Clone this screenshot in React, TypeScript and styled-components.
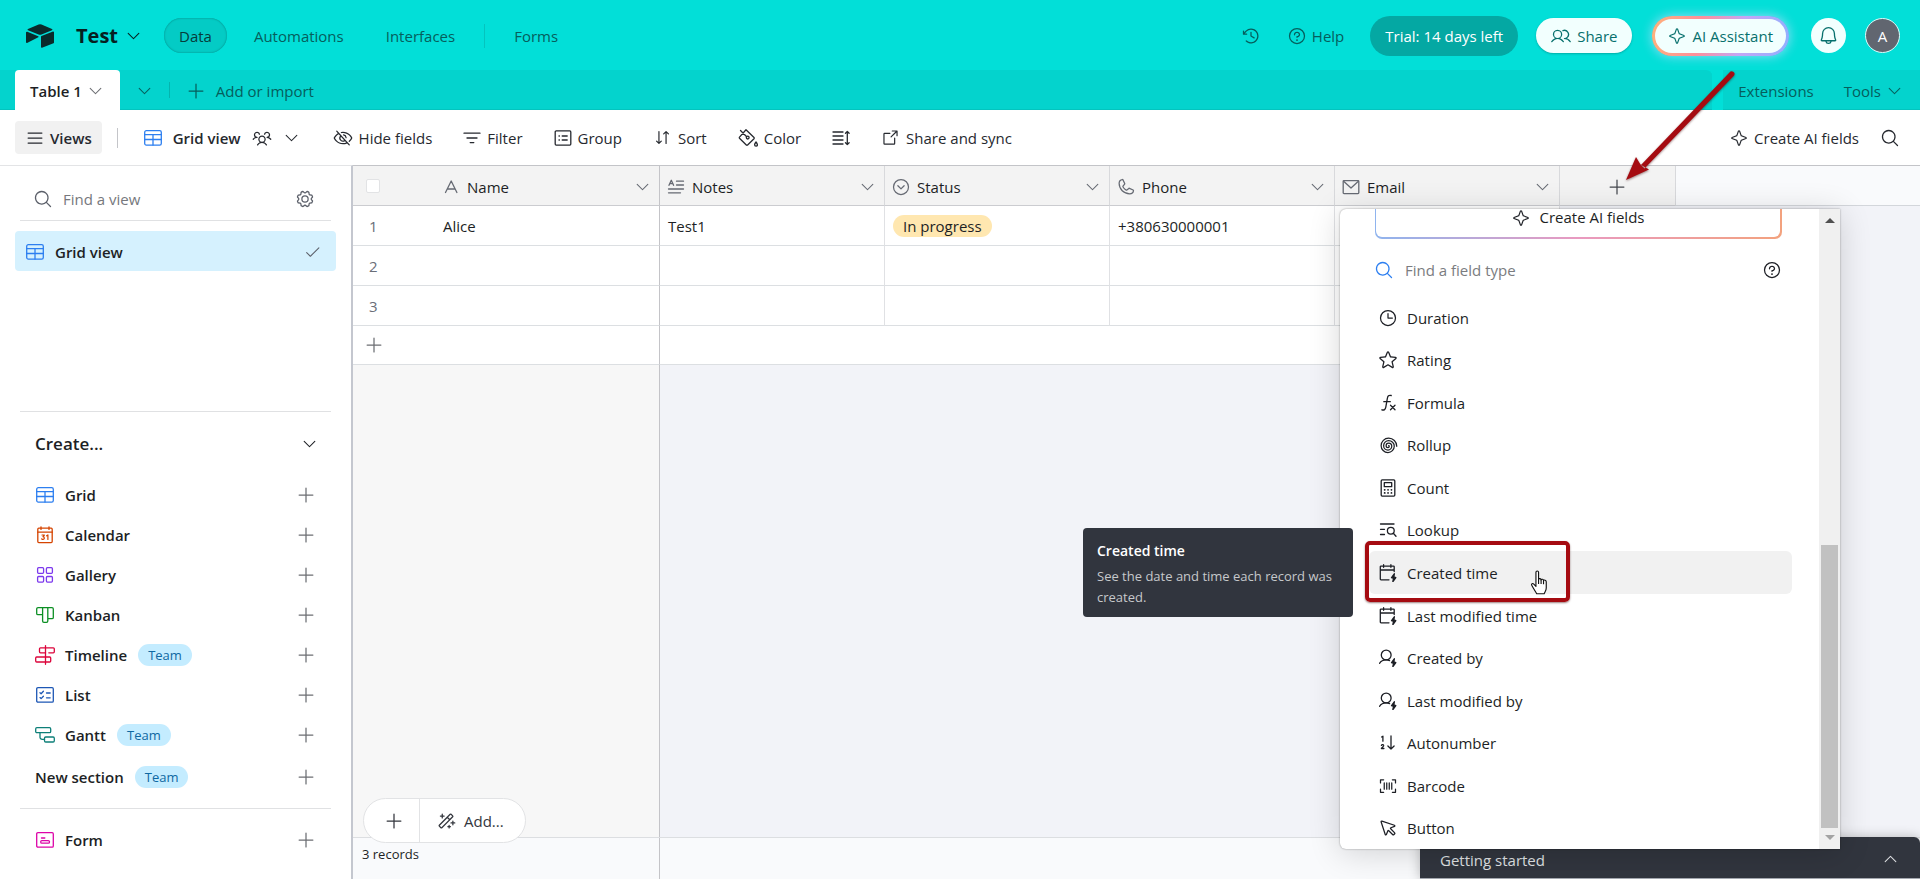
import React from "react";
import styled, { createGlobalStyle, css } from "styled-components";
import {
  PiArrowSquareOut, PiArrowsDownUp, PiBarcode, PiBell, PiCaretCircleDown, PiCaretDown,
  PiCaretUp, PiCheck, PiClock, PiClockCounterClockwise, PiCursor, PiEyeSlash,
  PiGear, PiList, PiMagicWand, PiMagnifyingGlass, PiPhone, PiPlus, PiQuestion,
  PiSpiral, PiStar, PiStarFour, PiUsers, PiUsersThree,
} from "react-icons/pi";

const GlobalStyle = createGlobalStyle`
  *, *::before, *::after { box-sizing: border-box; }
  body { margin: 0; color: #1d1f25; background: #fff; font: 15px/20px "Open Sans", "Noto Sans", sans-serif; }
  button, input { font: inherit; color: inherit; }
  button { border: 0; padding: 0; background: none; cursor: pointer; white-space: nowrap; }
  a { color: inherit; text-decoration: none; }
  svg { display: block; flex: none; }
`;

/* ---------- icons ---------- */

const Stroke = ({ size = 18, children }: { size?: number; children: React.ReactNode }) => (
  <svg width={size} height={size} viewBox="0 0 18 18" fill="none" stroke="currentColor" strokeWidth="1.3" strokeLinecap="round" strokeLinejoin="round" aria-hidden="true">
    {children}
  </svg>
);

const GridIcon = () => (
  <Stroke><rect x="0.7" y="1.7" width="16.6" height="14.4" rx="1.6" /><path d="M.7 5.7h16.6M.7 10.5h16.6M9 5.7v10.4" /></Stroke>
);
const CalendarIcon = () => (
  <Stroke>
    <rect x="1.8" y="2.2" width="14.4" height="14.4" rx="1" /><path d="M1.8 6.2h14.4M5 .8v2.6M13 .8v2.6" />
    <path d="M6 9h2.4L7 10.7c1.6 0 1.9 2.6 0 2.7-.6 0-1-.2-1.3-.6M10.6 9.8l1.3-.9v4.5" strokeWidth="1.2" />
  </Stroke>
);
const GalleryIcon = () => (
  <Stroke><rect x="1.6" y="1.7" width="6" height="5.6" rx="1" /><rect x="10.4" y="1.7" width="6" height="5.6" rx="1" /><rect x="1.6" y="10.5" width="6" height="5.6" rx="1" /><rect x="10.4" y="10.5" width="6" height="5.6" rx="1" /></Stroke>
);
const KanbanIcon = () => (
  <Stroke><path d="M2 1.7h14a1.3 1.3 0 0 1 1.3 1.3v8.4a1.3 1.3 0 0 1-1.3 1.3h-4.2V15a1.3 1.3 0 0 1-1.3 1.3H7.9A1.3 1.3 0 0 1 6.600 15V8.700H2A1.300 1.300 0 0 1 .7 7.400V3A1.300 1.300 0 0 1 2 1.700zM6.600 1.700v7M11.800 1.700v11" /></Stroke>
);
const TimelineIcon = () => (
  <svg width="20" height="20" viewBox="0 0 20 20" fill="none" stroke="currentColor" strokeWidth="1.3" strokeLinecap="round" aria-hidden="true">
    <path d="M10.500.7v18.600" /><path d="M10.500 7.800H5.500a1 1 0 0 1-1-1v-3a1 1 0 0 1 1-1h12.800a1 1 0 0 1 1 1v3a1 1 0 0 1-1 1h-4.500M10.500 12H1.700a1 1 0 0 0-1 1v3a1 1 0 0 0 1 1h13a1 1 0 0 0 1-1v-3a1 1 0 0 0-1-1z" />
  </svg>
);
const ListIcon = () => (
  <Stroke><rect x=".7" y="1.700" width="16.600" height="14.400" rx="1.200" /><path d="M4 6.700l1.100 1 2.300-2.400M4 11.600l1.100 1 2.300-2.400M10.500 7h3.700M10.500 11.800h3.700" /></Stroke>
);
const GanttIcon = () => (
  <svg width="20" height="20" viewBox="0 0 20 20" fill="none" stroke="currentColor" strokeWidth="1.3" strokeLinecap="round" aria-hidden="true">
    <rect x=".7" y="2.700" width="15" height="5" rx="1.200" /><rect x="9.500" y="12" width="9.800" height="5" rx="1.200" /><path d="M5 7.700v4.500a2.200 2.200 0 0 0 2.200 2.200h2.300" />
  </svg>
);
const FormIcon = () => (
  <Stroke><rect x=".7" y="1.700" width="16.600" height="14.400" rx="1.200" /><path d="M5.500 7h3.300" /><rect x="4.700" y="9.600" width="8.800" height="2.600" rx="1.200" /></Stroke>
);
const FilterIcon = () => <Stroke><path d="M1 4.200h16M4 9h10M7.200 13.600h3.600" /></Stroke>;
const GroupIcon = () => (
  <Stroke><rect x="1.200" y="1.900" width="15.600" height="14.200" rx="1" /><path d="M5 7h.4M5 11h.4M8.200 7h5M8.200 11h5" /></Stroke>
);
const ColorIcon = () => (
  <svg width="20" height="20" viewBox="0 0 20 20" fill="none" stroke="currentColor" strokeWidth="1.3" strokeLinecap="round" strokeLinejoin="round" aria-hidden="true">
    <path d="M2.500 2.500l6.200 6.200M8 1.800l8 7.700a.9.9 0 0 1 0 1.200L9.600 17a1 1 0 0 1-1.300 0L1.500 10.300a.9.9 0 0 1 0-1.200z" />
    <circle cx="9.700" cy="9.600" r="1.400" />
    <path d="M18 14c-1 1.400-1.400 2-1.400 2.800a1.400 1.400 0 0 0 2.800 0c0-.8-.4-1.400-1.400-2.800z" />
  </svg>
);
const RowHeightIcon = () => (
  <Stroke><path d="M1 3h10M1 7h10M1 11h10M1 15h10M15.300 2.500v13M13.500 4.200l1.800-1.800 1.800 1.800M13.500 13.800l1.800 1.800 1.800-1.800" /></Stroke>
);
const TextFieldIcon = () => <Stroke><path d="M3.500 14.500L9.200 3l5.700 11.500M5.300 11h7.800" /></Stroke>;
const LongTextIcon = () => <Stroke><path d="M2 7.300l2.300-5 2.300 5M2.900 5.700h2.800M9.500 3.200h7M9.500 7h7M1.500 11h15M1.500 14.800h12" /></Stroke>;
const MailIcon = () => (
  <Stroke><rect x="1.200" y="2.600" width="15.600" height="13" rx=".8" /><path d="M1.600 3.200L9 10l7.400-6.800" /></Stroke>
);
const FormulaIcon = () => (
  <Stroke><path d="M12.200 1.500c-2.600-.6-3.400.6-3.800 2.700L6.800 13.200c-.4 2.300-1.700 3.300-4 2.600M4.800 7.700h6.500M11.500 11.300l4.500 4.500M16 11.300L11.500 15.800" /></Stroke>
);
const CalculatorIcon = () => (
  <Stroke>
    <rect x="2.200" y=".9" width="13.600" height="16.200" rx="1" /><rect x="5.300" y="3.700" width="7.400" height="4" />
    <path d="M5.600 10.800h.2M9 10.800h.1M12.400 10.800h.1M5.600 13.900h.2M9 13.900h.1M12.400 13.900h.1" strokeWidth="1.700" />
  </Stroke>
);
const LookupIcon = () => (
  <Stroke><path d="M1.500 3h13.500M1.500 8.300h4M1.500 13.500h4" /><circle cx="11.800" cy="9.800" r="3.400" /><path d="M14.300 12.300l2.700 3" /></Stroke>
);
const Bolt = () => <path d="M15.300 9.800l-2.700 3.800 2 .8-.7 3.100 2.900-3.800-2-.8z" fill="currentColor" strokeWidth="1.400" />;
const DateBoltIcon = () => (
  <Stroke><path d="M10 15.800H2a.7.7 0 0 1-.7-.7V2.800a.7.7 0 0 1 .7-.7h12.500a.7.7 0 0 1 .7.7V7.500M1.300 6h13.900M4.600.7v2.600M11.900.7v2.600" /><Bolt /></Stroke>
);
const UserBoltIcon = () => (
  <Stroke><circle cx="7.200" cy="6" r="4.900" /><path d="M.5 14.300c1.400-2.200 3.400-3.400 6.700-3.400 1.400 0 2.500.3 3.400.7" /><Bolt /></Stroke>
);
const AutonumberIcon = () => (
  <Stroke><path d="M2.600 3l1.300-.8v5M2.400 11.400c.5-1.300 2.600-.9 2.200.5-.3.900-1.500 1.700-2.200 2.600h2.500M12 2v13M8.900 12l3.100 3 3.100-3" /></Stroke>
);
const Logo = () => (
  <svg width="28" height="24" viewBox="0 0 28 24" fill="#0a2b2b" aria-hidden="true">
    <path d="M12.600.5L2 4.900c-.6.2-.6 1.100 0 1.300l10.600 4.200c.9.400 2 .4 2.900 0l10.500-4.200c.6-.2.6-1 0-1.300L15.500.5a4 4 0 0 0-2.900 0z" />
    <path d="M15 12.700v10.400c0 .5.500.8 1 .6l11.500-4.500c.3-.1.500-.4.500-.7V8.200c0-.5-.5-.8-1-.7l-11.500 4.600c-.3.100-.5.300-.5.600zM12.300 13.200L2 18.600l-.9.400c-.5.200-1.100-.2-1.100-.7V8.600c0-.7.700-1.100 1.300-.8l10.900 4.400c.5.200.5.800.1 1z" />
  </svg>
);

/* ---------- header ---------- */

const Page = styled.div`
  position: relative;
  display: flex;
  flex-direction: column;
  min-height: 100vh;
  overflow: hidden;
`;
const TopBar = styled.header`
  display: flex;
  align-items: center;
  justify-content: space-between;
  height: 70px;
  padding: 1px 20px 0 26px;
  background: #02dfd8;
  color: #065e5c;
`;
const Group = styled.div<{ $gap?: number }>`
  display: flex;
  align-items: center;
  gap: ${(p) => p.$gap ?? 0}px;
`;
const BaseName = styled.button`
  display: flex;
  align-items: center;
  gap: 7px;
  margin: 0 22px;
  color: #06201f;
  font-size: 20px;
  font-weight: 700;
`;
const NavTab = styled.a<{ $active?: boolean }>`
  display: flex;
  align-items: center;
  height: 35px;
  padding: 0 15px;
  border-radius: 18px;
  ${(p) => p.$active && css`
    background: #04cbc5;
    box-shadow: inset 0 0 2px #04807c;
    color: #063c3b;
  `}
`;
const Divider = styled.span<{ $h: number; $color: string; $m: string }>`
  width: 1px;
  height: ${(p) => p.$h}px;
  margin: ${(p) => p.$m};
  background: ${(p) => p.$color};
`;
const IconLink = styled.button`
  display: flex;
  align-items: center;
  gap: 5px;
`;
const Trial = styled.button`
  height: 40px;
  margin: 0 18px 0 26px;
  padding: 0 15px;
  border-radius: 20px;
  background: #04a8a3;
  color: #fff;
`;
const Pill = styled.button`
  display: flex;
  align-items: center;
  gap: 6px;
  height: 35px;
  padding: 0 15px;
  border-radius: 18px;
  background: #f2fffe;
  box-shadow: 0 1px 2px rgba(0, 60, 60, 0.3);
  color: #07706d;
`;
const AiRing = styled.div`
  margin: 0 22px 0 20px;
  padding: 3px;
  border-radius: 20px;
  background: linear-gradient(100deg, #ffb27a, #ff8f9a 35%, #c3a6f5 65%, #8fb0ff);
  box-shadow: 0 0 12px rgba(190, 220, 255, 0.8);
`;
const AiButton = styled(Pill)`
  height: 34px;
  padding: 0 13px;
  box-shadow: none;
`;
const Round = styled.button<{ $dark?: boolean }>`
  display: grid;
  place-items: center;
  width: 35px;
  height: 35px;
  border-radius: 50%;
  background: ${(p) => (p.$dark ? "#616670" : "#f2fffe")};
  color: ${(p) => (p.$dark ? "#fff" : "#07706d")};
  ${(p) => p.$dark && css`border: 1px solid #d8fffd; margin-left: 19px;`}
`;

const TableBar = styled.nav`
  display: flex;
  height: 40px;
  background: #02dfd8;
  color: #065e5c;
`;
const TabStrip = styled.div`
  display: flex;
  align-items: center;
  flex: 1;
  height: 40px;
  margin-right: 11px;
  padding-left: 15px;
  border-radius: 0 6px 0 0;
  background: #04d3cd;
  box-shadow: inset 0 -1px 0 #03c4be;
`;
const TableTab = styled.button`
  display: flex;
  align-items: center;
  gap: 5px;
  height: 40px;
  padding: 1px 16px 0 15px;
  border-radius: 4px 4px 0 0;
  background: #fff;
  color: #1d1f25;
  font-weight: 600;
  svg { color: #6c6e73; }
`;
const StripButton = styled.button`
  display: flex;
  align-items: center;
  gap: 10px;
  margin-left: 16px;
  padding-top: 1px;
`;
const TabTools = styled.div`
  display: flex;
  align-items: center;
  gap: 30px;
  padding: 1px 17px 0 15px;
  background: #04d3cd;
  box-shadow: inset 0 -1px 0 #03c4be;
`;

const Toolbar = styled.div`
  display: flex;
  align-items: center;
  height: 55px;
  padding: 0 20px 0 15px;
  color: #26292f;
`;
const ViewsButton = styled.button`
  display: flex;
  align-items: center;
  gap: 5px;
  height: 33px;
  padding: 0 10px;
  border-radius: 4px;
  background: #f1f1f1;
  font-weight: 600;
`;
const Tool = styled.button<{ $strong?: boolean }>`
  display: flex;
  align-items: center;
  gap: ${(p) => (p.$strong ? 11 : 6)}px;
  font-weight: ${(p) => (p.$strong ? 600 : 400)};
  svg:first-child { color: ${(p) => (p.$strong ? "#2d7ff0" : "inherit")}; }
`;
const ToolList = styled.div`
  display: flex;
  align-items: center;
  gap: 31px;
  flex: 1;
  margin-left: 33px;
`;

/* ---------- sidebar ---------- */

const Main = styled.div`
  display: flex;
  flex: 1;
`;
const Sidebar = styled.aside`
  width: 353px;
  padding: 0 15px;
  border-top: 1px solid #e3e4e6;
  border-right: 2px solid #c4c7cf;
`;
const FindView = styled.label`
  display: flex;
  align-items: center;
  height: 55px;
  margin: 0 5px;
  padding: 11px 16px 0 13px;
  border-bottom: 1px solid #e0e1e3;
  color: #5c606a;
  input {
    flex: 1;
    min-width: 0;
    margin-left: 10px;
    padding: 0;
    border: 0;
    outline: 0;
    background: none;
  }
  input::placeholder { color: #76787d; opacity: 1; }
`;
const ActiveView = styled.button`
  display: flex;
  align-items: center;
  gap: 11px;
  width: 100%;
  height: 40px;
  margin: 10px 0 140px;
  padding: 1px 15px 0 11px;
  border-radius: 4px;
  background: #d5f1fe;
  font-weight: 600;
  svg:first-child { color: #2d7ff0; }
  svg:last-child { margin-left: auto; color: #5c606a; }
`;
const CreateBlock = styled.section`
  margin: 0 5px;
  padding-bottom: 9px;
  border-top: 1px solid #e0e1e3;
`;
const CreateHead = styled.button`
  display: flex;
  align-items: center;
  justify-content: space-between;
  width: 100%;
  height: 63px;
  padding: 0 13px 0 15px;
  font-size: 17px;
  font-weight: 600;
`;
const CreateRow = styled.button<{ $h?: number }>`
  display: flex;
  align-items: center;
  width: 100%;
  height: ${(p) => p.$h ?? 40}px;
  padding: 0 15px;
  font-weight: 600;
  > svg:last-child { margin-left: auto; color: #6c6e73; }
`;
const IconSlot = styled.span<{ $color?: string }>`
  display: grid;
  place-items: center;
  flex: none;
  width: 20px;
  color: ${(p) => p.$color ?? "inherit"};
`;
const RowIcon = styled(IconSlot)`
  margin-right: 10px;
`;
const Team = styled.span`
  margin-left: 11px;
  padding: 0 10px;
  border-radius: 11px;
  background: #c4ecff;
  color: #0f68a2;
  font-size: 13px;
  font-weight: 500;
  line-height: 22px;
`;

/* ---------- grid ---------- */

const GridArea = styled.main`
  position: relative;
  display: flex;
  flex-direction: column;
  flex: 1;
  min-width: 0;
  border-top: 1px solid #c3c4c8;
  background: #f2f3f8;
`;
const TableLine = styled.div`
  display: flex;
`;
const HeaderRest = styled.div`
  flex: 1;
  height: 40px;
  border-bottom: 1px solid #d3d6db;
  background: #f9fafc;
`;
const Table = styled.table`
  width: 1323px;
  flex: none;
  table-layout: fixed;
  border-spacing: 0;
  text-align: left;
`;
const Th = styled.th<{ $plain?: boolean; $edge?: boolean }>`
  height: 40px;
  padding: 2px 8px 0 6px;
  border-right: ${(p) => (p.$plain ? 0 : 1)}px solid ${(p) => (p.$edge ? "#c4c4c8" : "#d8d9dc")};
  border-bottom: 1px solid #cbccd0;
  background: #f3f3f3;
  font-weight: 400;
`;
const FieldHead = styled.div`
  display: flex;
  align-items: center;
  gap: 6px;
  color: #666a73;
`;
const FieldName = styled.span`
  flex: 1;
  color: #1d1f25;
`;
const Td = styled.td<{ $plain?: boolean; $edge?: boolean; $short?: boolean }>`
  height: ${(p) => (p.$short ? 39 : 40)}px;
  padding: 0 8px;
  border-right: ${(p) => (p.$plain ? 0 : 1)}px solid ${(p) => (p.$edge ? "#c4c4c8" : "#e0e1e4")};
  border-bottom: 1px solid #dcdfe2;
  background: #fff;
`;
const RowNumber = styled(Td)`
  padding: 0 0 0 16px;
  color: #6a6e78;
`;
const HeadCheck = styled.input`
  display: block;
  appearance: none;
  width: 14px;
  height: 14px;
  margin: 0 0 2px 7px;
  border: 1px solid #e2e3e5;
  border-radius: 2px;
  background: #fff;
`;
const Center = styled.button`
  display: grid;
  place-items: center;
  width: 100%;
  color: #45484f;
`;
const AddRow = styled.button`
  display: block;
  margin-left: -5px;
  color: #6c6e73;
`;
const Status = styled.span`
  display: inline-block;
  padding: 0 10px;
  border-radius: 11px;
  background: #ffe7b0;
  line-height: 22px;
`;
const Body = styled.div`
  display: flex;
  flex: 1;
`;
const FrozenBody = styled.div`
  width: 307px;
  border-right: 1px solid #c4c4c8;
  background: #f7f7f7;
`;
const Footer = styled.footer`
  height: 42px;
  border-top: 1px solid #dcdee1;
  background: #f9fafc;
`;
const Records = styled.div`
  width: 307px;
  height: 41px;
  padding: 6px 9px;
  border-right: 1px solid #c4c4c8;
  font-size: 13px;
`;
const AddPill = styled.div`
  position: absolute;
  left: 10px;
  bottom: 36px;
  display: flex;
  height: 45px;
  border: 1px solid #e2e3e5;
  border-radius: 23px;
  background: #fff;
  color: #33363d;
  button { display: flex; align-items: center; gap: 8px; padding: 0 21px 0 16px; }
  button:first-child { padding: 0 15px 0 20px; border-right: 1px solid #e2e3e5; }
`;

/* ---------- field type menu ---------- */

const Menu = styled.section`
  position: absolute;
  top: 43px;
  left: 987px;
  bottom: 30px;
  z-index: 3;
  display: flex;
  width: 500px;
  border-radius: 6px 0 0 6px;
  background: #fff;
  box-shadow: 0 0 2px rgba(0, 0, 0, 0.4), 0 4px 32px rgba(0, 0, 0, 0.16);
`;
const MenuContent = styled.div`
  display: flex;
  flex-direction: column;
  flex: 1;
  padding: 0 27px 0 29px;
`;
const AiFrame = styled.div`
  margin: 0 10px 0 6px;
  padding: 0 2px 2px 1px;
  border-radius: 0 0 7px 7px;
  background: linear-gradient(90deg, #8fb4ee, #e99ac0 50%, #f3a27e);
`;
const AiFields = styled.button`
  display: flex;
  align-items: flex-start;
  justify-content: center;
  gap: 10px;
  width: 100%;
  height: 28px;
  border-radius: 0 0 6px 6px;
  background: #fff;
  line-height: 17px;
`;
const FindField = styled.label`
  display: flex;
  align-items: center;
  height: 57px;
  padding: 4px 10px 0 5px;
  > svg:first-child { color: #2d7ff0; }
  input {
    flex: 1;
    margin-left: 11px;
    padding: 0;
    border: 0;
    outline: 0;
  }
  input::placeholder { color: #7a7c80; opacity: 1; }
`;
const FieldList = styled.ul`
  display: grid;
  grid-auto-rows: 1fr;
  flex: 1;
  margin: 0;
  padding: 0;
  list-style: none;
`;
const FieldItem = styled.button<{ $hover?: boolean }>`
  display: flex;
  align-items: center;
  gap: 9px;
  width: 100%;
  height: 100%;
  padding: 1px 9px 0;
  border-radius: 6px;
  background: ${(p) => (p.$hover ? "#f1f1f1" : "none")};
`;
const ScrollTrack = styled.div`
  display: flex;
  flex-direction: column;
  align-items: center;
  width: 21px;
  padding: 9px 0;
  background: #f0f0f0;
`;
const ScrollThumb = styled.div`
  width: 17px;
  height: 283px;
  margin: auto 0 7px;
  background: #c1c1c1;
`;
const ScrollArrow = styled.span<{ $up?: boolean }>`
  border: 5px solid transparent;
  ${(p) => (p.$up ? "border-top: 0; border-bottom-color: #505050;" : "border-bottom: 0; border-top-color: #a3a3a3;")}
`;
const Tooltip = styled.div`
  position: absolute;
  z-index: 4;
  top: 362px;
  left: 730px;
  width: 270px;
  height: 89px;
  padding: 13px 14px;
  border-radius: 4px;
  background: #31353e;
  color: #c6c8cb;
  font-size: 13px;
  line-height: 21px;
  strong { display: block; margin-bottom: 5px; color: #fff; font-size: 14px; font-weight: 600; line-height: 20px; }
`;
const Highlight = styled.div`
  position: absolute;
  z-index: 5;
  top: 375px;
  left: 1012px;
  width: 205px;
  height: 61px;
  border: 4px solid #a50b11;
  border-radius: 5px;
  box-shadow: 0 1px 2px rgba(60, 0, 0, 0.5);
`;
const Pointer = styled.svg`
  position: absolute;
  z-index: 6;
  top: 401px;
  left: 1177px;
`;
const Arrow = styled.svg`
  position: absolute;
  z-index: 6;
  top: -96px;
  left: 1270px;
  filter: drop-shadow(0 1px 1px rgba(60, 0, 0, 0.5));
  pointer-events: none;
`;
const Started = styled.button`
  position: absolute;
  right: 0;
  bottom: 0;
  z-index: 2;
  display: flex;
  align-items: center;
  justify-content: space-between;
  width: 500px;
  height: 42px;
  padding: 4px 21px 0 20px;
  border-bottom: 1px solid #a4a8b0;
  border-radius: 6px 6px 0 0;
  background: #31353e;
  box-shadow: 0 0 12px rgba(0, 0, 0, 0.25);
  color: #dfe0e3;
`;

const views = [
  { name: "Grid", color: "#2d7ff0", icon: <GridIcon /> },
  { name: "Calendar", color: "#d54401", icon: <CalendarIcon /> },
  { name: "Gallery", color: "#7c39ed", icon: <GalleryIcon /> },
  { name: "Kanban", color: "#0c8f24", icon: <KanbanIcon /> },
  { name: "Timeline", color: "#dc043b", icon: <TimelineIcon />, team: true },
  { name: "List", color: "#1d57b5", icon: <ListIcon /> },
  { name: "Gantt", color: "#0d7f78", icon: <GanttIcon />, team: true },
];

const columns = [
  { name: "Name", icon: <TextFieldIcon />, edge: true },
  { name: "Notes", icon: <LongTextIcon /> },
  { name: "Status", icon: <PiCaretCircleDown size={20} /> },
  { name: "Phone", icon: <PiPhone size={20} /> },
  { name: "Email", icon: <MailIcon /> },
];

const rows = [["Alice", "Test1", "In progress", "+380630000001", ""], ["", "", "", "", ""], ["", "", "", "", ""]];

const fieldTypes = [
  { name: "Duration", icon: <PiClock size={20} /> },
  { name: "Rating", icon: <PiStar size={20} /> },
  { name: "Formula", icon: <FormulaIcon /> },
  { name: "Rollup", icon: <PiSpiral size={20} /> },
  { name: "Count", icon: <CalculatorIcon /> },
  { name: "Lookup", icon: <LookupIcon /> },
  { name: "Created time", icon: <DateBoltIcon />, hover: true },
  { name: "Last modified time", icon: <DateBoltIcon /> },
  { name: "Created by", icon: <UserBoltIcon /> },
  { name: "Last modified by", icon: <UserBoltIcon /> },
  { name: "Autonumber", icon: <AutonumberIcon /> },
  { name: "Barcode", icon: <PiBarcode size={20} /> },
  { name: "Button", icon: <PiCursor size={20} /> },
];

export default function App() {
  return (
    <Page>
      <GlobalStyle />
      <TopBar>
        <Group>
          <Logo />
          <BaseName>Test <PiCaretDown size={17} /></BaseName>
          <Group $gap={12}>
            <NavTab href="#data" $active>Data</NavTab>
            <NavTab href="#automations">Automations</NavTab>
            <NavTab href="#interfaces">Interfaces</NavTab>
          </Group>
          <Divider $h={24} $color="#04c4be" $m="0 14px" />
          <NavTab href="#forms">Forms</NavTab>
        </Group>
        <Group>
          <Group $gap={26}>
            <IconLink aria-label="History"><PiClockCounterClockwise size={20} /></IconLink>
            <IconLink><PiQuestion size={20} />Help</IconLink>
          </Group>
          <Trial>Trial: 14 days left</Trial>
          <Pill><PiUsers size={20} />Share</Pill>
          <AiRing><AiButton><PiStarFour size={18} />AI Assistant</AiButton></AiRing>
          <Round aria-label="Notifications"><PiBell size={21} /></Round>
          <Round $dark aria-label="Account">A</Round>
        </Group>
      </TopBar>

      <TableBar>
        <TabStrip>
          <TableTab>Table 1 <PiCaretDown size={17} /></TableTab>
          <StripButton aria-label="All tables"><PiCaretDown size={17} /></StripButton>
          <Divider $h={16} $color="#04b4ae" $m="0 0 0 16px" />
          <StripButton><PiPlus size={20} />Add or import</StripButton>
        </TabStrip>
        <TabTools>
          <a href="#extensions">Extensions</a>
          <IconLink>Tools <PiCaretDown size={17} /></IconLink>
        </TabTools>
      </TableBar>

      <Toolbar>
        <ViewsButton><PiList size={20} />Views</ViewsButton>
        <Divider $h={20} $color="#c4c5c9" $m="0 26px 0 15px" />
        <Tool $strong><GridIcon />Grid view<PiUsersThree size={20} /><PiCaretDown size={17} /></Tool>
        <ToolList>
          <Tool><PiEyeSlash size={20} />Hide fields</Tool>
          <Tool><FilterIcon />Filter</Tool>
          <Tool><GroupIcon />Group</Tool>
          <Tool><PiArrowsDownUp size={19} />Sort</Tool>
          <Tool><ColorIcon />Color</Tool>
          <Tool aria-label="Row height"><RowHeightIcon /></Tool>
          <Tool><PiArrowSquareOut size={19} />Share and sync</Tool>
        </ToolList>
        <Group $gap={21}>
          <Tool><PiStarFour size={18} />Create AI fields</Tool>
          <Tool aria-label="Search"><PiMagnifyingGlass size={20} /></Tool>
        </Group>
      </Toolbar>

      <Main>
        <Sidebar>
          <FindView>
            <PiMagnifyingGlass size={20} />
            <input placeholder="Find a view" aria-label="Find a view" />
            <PiGear size={20} />
          </FindView>
          <ActiveView><GridIcon />Grid view<PiCheck size={17} /></ActiveView>
          <CreateBlock>
            <CreateHead>Create...<PiCaretDown size={17} /></CreateHead>
            {views.map((v) => (
              <CreateRow key={v.name}>
                <RowIcon $color={v.color}>{v.icon}</RowIcon>
                {v.name}
                {v.team && <Team>Team</Team>}
                <PiPlus size={20} />
              </CreateRow>
            ))}
            <CreateRow $h={44}>New section<Team>Team</Team><PiPlus size={20} /></CreateRow>
          </CreateBlock>
          <CreateBlock>
            <CreateRow $h={61}>
              <RowIcon $color="#dd04a8"><FormIcon /></RowIcon>
              Form
              <PiPlus size={20} />
            </CreateRow>
          </CreateBlock>
        </Sidebar>

        <GridArea>
          <TableLine>
            <Table>
              <colgroup>
                <col width="82" /><col width="225" /><col width="225" /><col width="225" /><col width="225" /><col width="225" /><col width="116" />
              </colgroup>
              <thead>
                <tr>
                  <Th $plain><HeadCheck type="checkbox" aria-label="Select all records" /></Th>
                  {columns.map((c) => (
                    <Th key={c.name} $edge={c.edge}>
                      <FieldHead>
                        <IconSlot>{c.icon}</IconSlot>
                        <FieldName>{c.name}</FieldName>
                        <PiCaretDown size={17} />
                      </FieldHead>
                    </Th>
                  ))}
                  <Th><Center aria-label="Add field"><PiPlus size={20} /></Center></Th>
                </tr>
              </thead>
              <tbody>
                {rows.map((r, i) => (
                  <tr key={i}>
                    <RowNumber $plain>{i + 1}</RowNumber>
                    {r.map((cell, j) => (
                      <Td key={j} $edge={j === 0}>{cell && j === 2 ? <Status>{cell}</Status> : cell}</Td>
                    ))}
                  </tr>
                ))}
                <tr>
                  <RowNumber $plain $short><AddRow aria-label="Add record"><PiPlus size={20} /></AddRow></RowNumber>
                  <Td $short $edge />
                  <Td $short $plain colSpan={4} />
                </tr>
              </tbody>
            </Table>
            <HeaderRest />
          </TableLine>
          <Body><FrozenBody /></Body>
          <Footer><Records>3 records</Records></Footer>

          <AddPill>
            <button aria-label="Add record"><PiPlus size={20} /></button>
            <button><PiMagicWand size={20} />Add...</button>
          </AddPill>

          <Menu>
            <MenuContent>
              <AiFrame><AiFields><PiStarFour size={18} />Create AI fields</AiFields></AiFrame>
              <FindField>
                <PiMagnifyingGlass size={20} />
                <input placeholder="Find a field type" aria-label="Find a field type" />
                <PiQuestion size={20} />
              </FindField>
              <FieldList>
                {fieldTypes.map((f) => (
                  <li key={f.name}>
                    <FieldItem $hover={f.hover}><IconSlot>{f.icon}</IconSlot>{f.name}</FieldItem>
                  </li>
                ))}
              </FieldList>
            </MenuContent>
            <ScrollTrack>
              <ScrollArrow $up />
              <ScrollThumb />
              <ScrollArrow />
            </ScrollTrack>
          </Menu>

          <Tooltip role="tooltip">
            <strong>Created time</strong>
            See the date and time each record was created.
          </Tooltip>
          <Highlight />
          <Pointer width="19" height="30" viewBox="0 0 20 32" fill="#fff" stroke="#111" strokeWidth="1.2" strokeLinejoin="round">
            <path d="M7 28.500c-1.800-3-4-6.500-5.300-9-.7-1.400.9-2.600 2.200-1.300l2.300 2.500V5.700c0-2 2.800-2 2.800 0v7.500c.4-1.200 2.600-1 2.700.5.5-1 2.500-.8 2.600.7.600-.9 2.900-.5 2.900 1.400v6.500c0 3-1.500 4.200-2.200 6.200z" />
            <path d="M9 13v5M11.700 13.700V18M14.300 14.500V18.500" fill="none" />
          </Pointer>
          <Arrow width="120" height="116" viewBox="0 0 120 116" fill="#a50b11">
            <path d="M106.500 2.500L18 95l3.500 3.500L111 5.500a2.500 2.500 0 0 0-4.500-3zM3 110L13 87l4.500 7.500 8.500 5z" />
          </Arrow>
        </GridArea>
      </Main>
      <Started>Getting started <PiCaretUp size={17} /></Started>
    </Page>
  );
}
